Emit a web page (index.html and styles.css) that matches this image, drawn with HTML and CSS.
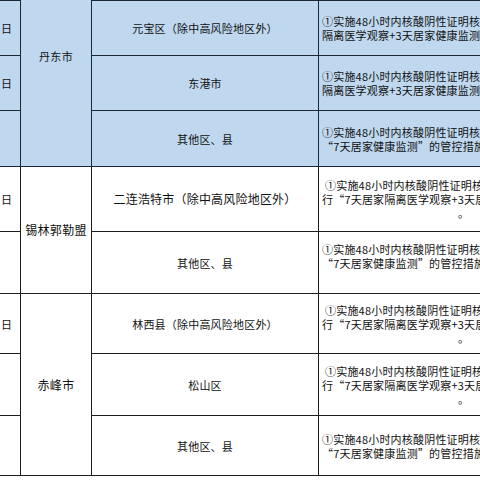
FILE: index.html
```html
<!DOCTYPE html>
<html lang="zh-CN">
<head>
<meta charset="utf-8">
<title>管控措施</title>
<link rel="stylesheet" href="styles.css">
</head>
<body>
<div class="sheet">
<table class="grid">
  <colgroup>
    <col class="c-date"><col class="c-city"><col class="c-area"><col class="c-rule">
  </colgroup>
  <tbody>
    <tr class="blue r-top">
      <td class="date"></td>
      <td class="city" rowspan="4">丹东市</td>
      <td class="area"></td>
      <td class="rule"></td>
    </tr>
    <tr class="blue r55">
      <td class="date">日</td>
      <td class="area">元宝区（除中高风险地区外）</td>
      <td class="rule">
        <div class="ln">①实施48小时内核酸阴性证明核验；②实行“7天居家</div>
        <div class="ln">隔离医学观察+3天居家健康监测”的管控措施。</div>
      </td>
    </tr>
    <tr class="blue r55">
      <td class="date">日</td>
      <td class="area">东港市</td>
      <td class="rule">
        <div class="ln">①实施48小时内核酸阴性证明核验；②实行“7天居家</div>
        <div class="ln">隔离医学观察+3天居家健康监测”的管控措施。</div>
      </td>
    </tr>
    <tr class="blue r56">
      <td class="date"></td>
      <td class="area">其他区、县</td>
      <td class="rule">
        <div class="ln">①实施48小时内核酸阴性证明核验；②实行</div>
        <div class="ln">“7天居家健康监测”的管控措施。</div>
      </td>
    </tr>

    <tr class="r65">
      <td class="date">日</td>
      <td class="city big" rowspan="2">锡林郭勒盟</td>
      <td class="area big">二连浩特市（除中高风险地区外）</td>
      <td class="rule">
        <div class="ln ind">①实施48小时内核酸阴性证明核验；②实</div>
        <div class="ln">行“7天居家隔离医学观察+3天居家健康监测”措施</div>
        <div class="ln mid">。</div>
      </td>
    </tr>
    <tr class="r62">
      <td class="date"></td>
      <td class="area">其他区、县</td>
      <td class="rule">
        <div class="ln">①实施48小时内核酸阴性证明核验；②实行</div>
        <div class="ln">“7天居家健康监测”的管控措施。</div>
        <div class="ln">&nbsp;</div>
      </td>
    </tr>

    <tr class="r60">
      <td class="date">日</td>
      <td class="city big" rowspan="3">赤峰市</td>
      <td class="area">林西县（除中高风险地区外）</td>
      <td class="rule">
        <div class="ln ind">①实施48小时内核酸阴性证明核验；②实</div>
        <div class="ln">行“7天居家隔离医学观察+3天居家健康监测”措施</div>
        <div class="ln mid">。</div>
      </td>
    </tr>
    <tr class="r62">
      <td class="date"></td>
      <td class="area">松山区</td>
      <td class="rule">
        <div class="ln ind">①实施48小时内核酸阴性证明核验；②实</div>
        <div class="ln">行“7天居家隔离医学观察+3天居家健康监测”措施</div>
        <div class="ln mid">。</div>
      </td>
    </tr>
    <tr class="r60">
      <td class="date"></td>
      <td class="area">其他区、县</td>
      <td class="rule">
        <div class="ln">①实施48小时内核酸阴性证明核验；②实行</div>
        <div class="ln">“7天居家健康监测”的管控措施。</div>
      </td>
    </tr>
  </tbody>
</table>
</div>
</body>
</html>
```

FILE: styles.css
```css
html, body {
  margin: 0;
  padding: 0;
  background: #ffffff;
}

body {
  width: 480px;
  height: 480px;
  overflow: hidden;
  font-family: "Noto Sans CJK SC", "Liberation Sans", sans-serif;
  color: #111111;
}

.sheet {
  width: 480px;
  height: 480px;
  overflow: hidden;
}

.grid {
  border-collapse: collapse;
  table-layout: fixed;
  width: 649px;
  margin-left: -41px;
  margin-top: -56px;
}

.c-date { width: 61px; }
.c-city { width: 71px; }
.c-area { width: 227px; }
.c-rule { width: 290px; }

.grid td {
  border: 1px solid #1c1c1c;
  padding: 0;
  vertical-align: middle;
  font-size: 11px;
  line-height: 14px;
  white-space: nowrap;
  overflow: hidden;
}

.blue td {
  background: #bfd8ef;
  border-color: #1a2836;
}

.grid td.city {
  text-align: center;
  letter-spacing: 0.3px;
}

.r-top { height: 56px; }
.r55 { height: 55px; }
.r56 { height: 56px; }
.r65 { height: 65px; }
.r62 { height: 62px; }
.r60 { height: 60px; }

.date {
  text-align: right;
  padding-right: 8px !important;
}

.area {
  text-align: center;
  letter-spacing: 0.2px;
}

.grid td.big {
  font-size: 12px;
}

.grid td.rule {
  font-size: 11px;
  line-height: 14px;
  letter-spacing: 0.2px;
}

.ln {
  padding-left: 3px;
  text-align: left;
}

.ln.ind {
  padding-left: 6px;
}

.ln.mid {
  padding-left: 0;
  text-align: center;
}
```
